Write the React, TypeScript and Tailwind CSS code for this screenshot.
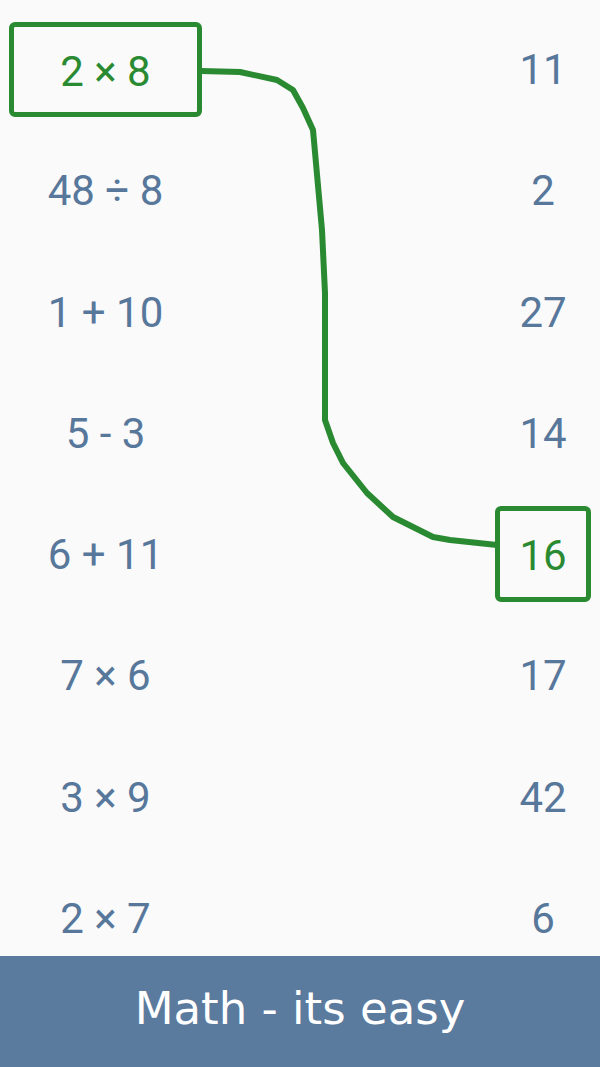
import React from "react";

const left = ["2 × 8", "48 ÷ 8", "1 + 10", "5 - 3", "6 + 11", "7 × 6", "3 × 9", "2 × 7"];
const right = ["11", "2", "27", "14", "16", "17", "42", "6"];

const selectedLeft = 0;
const selectedRight = 4;

export default function App() {
  return (
    <div className="flex h-screen w-full flex-col bg-[#fafafa]" style={{ fontFamily: "Roboto, 'Noto Sans', sans-serif" }}>
      <div className="relative flex-1 overflow-hidden">
        <div className="flex justify-between pt-[10px]">
          <div className="flex w-[211px] flex-col">
            {left.map((t, i) => (
              <div key={i} className="flex h-[121.3px] items-start justify-center">
                {i === selectedLeft ? (
                  <div className="mt-[12px] flex h-[95px] w-[193px] items-center justify-center rounded-[6px] border-[5px] border-[#2a8a32] pt-[3px] text-[42px] text-[#2a8a32]">
                    {t}
                  </div>
                ) : (
                  <div className="mt-[12px] flex h-[95px] items-center justify-center text-[42px] text-[#57779b]">{t}</div>
                )}
              </div>
            ))}
          </div>
          <div className="mr-[9px] flex w-[96px] flex-col">
            {right.map((t, i) => (
              <div key={i} className="flex h-[121.3px] items-start justify-center">
                {i === selectedRight ? (
                  <div className="mt-[11px] flex h-[96px] w-[96px] items-center justify-center rounded-[6px] border-[5px] border-[#2a8a32] pt-[3px] text-[42px] text-[#2a8a32]">
                    {t}
                  </div>
                ) : (
                  <div className="mt-[12px] flex h-[95px] items-center justify-center text-[42px] text-[#57779b]">{t}</div>
                )}
              </div>
            ))}
          </div>
        </div>
        {/* hand-drawn link between the two chosen cells */}
        <svg className="pointer-events-none absolute left-0 top-0" width="600" height="960" viewBox="0 0 600 960">
          <path
            d="M201 71 L240 72 L277 80 L293 90 L303 108 L313 130 L322 230 L325 293 L325 420 L333 443 L343 463 L367 493 L393 517 L433 537 L450 540 L497 545"
            fill="none"
            stroke="#2a8a32"
            strokeWidth="6"
            strokeLinejoin="round"
            strokeLinecap="round"
          />
        </svg>
      </div>
      <div
        className="flex h-[111px] items-center justify-center bg-[#5a7a9e] pb-[6px] text-[45px] text-white"
        style={{ fontFamily: "'DejaVu Sans', Verdana, sans-serif" }}
      >
        Math - its easy
      </div>
    </div>
  );
}
